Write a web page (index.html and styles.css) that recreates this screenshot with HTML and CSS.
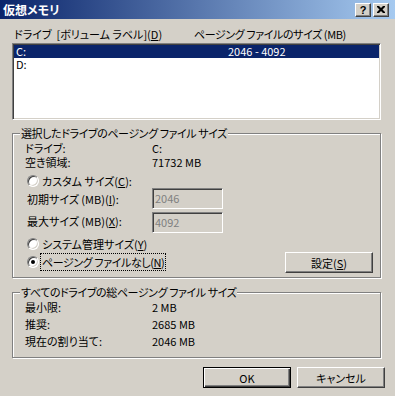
FILE: index.html
```html
<!DOCTYPE html>
<html lang="ja">
<head>
    <meta charset="UTF-8">
    <title>仮想メモリ</title>
    <link rel="stylesheet" href="styles.css">
</head>
<body>

<div class="window">
    <div class="titlebar">
        <span class="title">仮想メモリ</span>
        <div class="tb-buttons">
            <span class="tb-btn help">?</span>
            <span class="tb-btn">
                <svg width="8" height="7" viewBox="0 0 8 7">
                    <path d="M0 0h2l2 2 2-2h2v1l-2.5 2.5L8 6v1H6L4 5 2 7H0V6l2.5-2.5L0 1z" fill="#000"/>
                </svg>
            </span>
        </div>
    </div>

    <div class="client">
        <div class="col-head">
            <span class="col-drive">ドライブ&nbsp; [ボリューム ラベル](<u>D</u>)</span>
            <span class="narrow">ページング ファイルのサイズ (MB)</span>
        </div>

        <div class="listbox">
            <div class="row selected">
                <span class="c1">C:</span>
                <span>2046 - 4092</span>
            </div>
            <div class="row">
                <span class="c1">D:</span>
                <span></span>
            </div>
        </div>

        <fieldset class="group g1">
            <legend class="narrow">選択したドライブのページング ファイル サイズ</legend>
            <div class="info">
                <span class="k">ドライブ:</span>
                <span>C:</span>
            </div>
            <div class="info">
                <span class="k">空き領域:</span>
                <span>71732 MB</span>
            </div>
            <div class="option first">
                <span class="radio"></span>
                <span>カスタム サイズ(<u>C</u>):</span>
            </div>
            <div class="size-row">
                <span class="size-label">初期サイズ (MB)(<u>I</u>):</span>
                <span class="textbox">2046</span>
            </div>
            <div class="size-row second">
                <span class="size-label raised">最大サイズ (MB)(<u>X</u>):</span>
                <span class="textbox">4092</span>
            </div>
            <div class="bottom-block">
                <div class="options">
                    <div class="option">
                        <span class="radio"></span>
                        <span>システム管理サイズ(<u>Y</u>)</span>
                    </div>
                    <div class="option">
                        <span class="radio"><span class="dot"></span></span>
                        <span class="focused narrow">ページング ファイルなし(<u>N</u>)</span>
                    </div>
                </div>
                <span class="btn">設定(<u>S</u>)</span>
            </div>
        </fieldset>

        <fieldset class="group g2">
            <legend class="narrow">すべてのドライブの総ページング ファイル サイズ</legend>
            <div class="info tall">
                <span class="k">最小限:</span>
                <span>2 MB</span>
            </div>
            <div class="info tall">
                <span class="k">推奨:</span>
                <span>2685 MB</span>
            </div>
            <div class="info tall">
                <span class="k">現在の割り当て:</span>
                <span>2046 MB</span>
            </div>
        </fieldset>

        <div class="actions">
            <span class="btn default">OK</span>
            <span class="btn">キャンセル</span>
        </div>
    </div>
</div>

</body>
</html>
```

FILE: styles.css
```css
body {
    margin: 0;
    background: #d4d0c8;
    font-family: "Noto Sans CJK JP", sans-serif;
    font-size: 11px;
    font-feature-settings: "palt";
    color: #000;
}

.window {
    width: 395px;
    height: 396px;
    overflow: hidden;
}

/* タイトルバー */
.titlebar {
    height: 19px;
    background: linear-gradient(90deg, #0a246a, #a6caf0);
    display: flex;
    align-items: center;
    justify-content: space-between;
    padding: 0 6px 0 3px;
}

.title {
    color: #fff;
    font-weight: bold;
    font-size: 12px;
    line-height: 19px;
}

.tb-buttons {
    display: flex;
    gap: 2px;
}

.tb-btn {
    width: 16px;
    height: 14px;
    box-sizing: border-box;
    background: #d4d0c8;
    border: 1px solid;
    border-color: #fff #404040 #404040 #fff;
    box-shadow: inset -1px -1px #808080;
    display: flex;
    align-items: center;
    justify-content: center;
}

.tb-btn.help {
    font: bold 11px "Liberation Sans", sans-serif;
    line-height: 12px;
}

/* 本体 */
.client {
    padding: 9px 10px 0 12px;
}

.narrow {
    letter-spacing: -0.4px;
}

.col-head {
    display: flex;
    height: 13px;
    line-height: 13px;
}

.col-drive {
    width: 180px;
    padding-left: 2px;
}

.listbox {
    margin-top: 2px;
    width: 369px;
    height: 77px;
    box-sizing: border-box;
    background: #fff;
    border: 1px solid;
    border-color: #808080 #fff #fff #808080;
    box-shadow: inset 1px 1px #404040, inset -1px -1px #d4d0c8;
    padding: 1px;
}

.row {
    display: flex;
    height: 13px;
    line-height: 13px;
}

.row.selected {
    background: #0a246a;
    color: #fff;
}

.c1 {
    width: 212px;
    padding-left: 2px;
}

/* グループ枠 */
.group {
    margin: 7px 0 0;
    width: 369px;
    box-sizing: border-box;
    border: 1px solid #808080;
    box-shadow: inset 1px 1px #fff, 1px 1px #fff;
    padding: 0 7px 4px 12px;
}

.group legend {
    padding: 0 1px;
    margin-left: -5px;
    line-height: 13px;
    background: #d4d0c8;
}

.g2 {
    margin-top: 8px;
    padding-bottom: 7px;
}

.info {
    display: flex;
    height: 14px;
    line-height: 14px;
}

.info.tall {
    height: 17px;
    line-height: 17px;
}

.info .k {
    width: 127px;
    flex: none;
}

.g1 .info:first-of-type {
    margin-top: 1px;
}

.option {
    display: flex;
    align-items: center;
    height: 14px;
    padding-left: 2px;
}

.option.first {
    margin-top: 5px;
}

.radio {
    width: 12px;
    height: 12px;
    box-sizing: border-box;
    border-radius: 50%;
    background: #fff;
    border: 1px solid;
    border-color: #808080 #fff #fff #808080;
    box-shadow: inset 1px 1px #404040, inset -1px -1px #d4d0c8;
    margin-right: 3px;
    flex: none;
    display: flex;
    align-items: center;
    justify-content: center;
}

.dot {
    width: 4px;
    height: 4px;
    border-radius: 50%;
    background: #000;
}

.focused {
    outline: 1px dotted #000;
    padding: 0 1px;
    margin-left: -1px;
}

.size-row {
    display: flex;
    align-items: center;
    height: 21px;
    padding-left: 2px;
}

.size-row.second {
    margin-top: 3px;
}

.size-label {
    width: 125px;
    flex: none;
}

.size-label.raised {
    padding-bottom: 4px;
}

.textbox {
    width: 71px;
    height: 21px;
    box-sizing: border-box;
    border: 1px solid;
    border-color: #808080 #fff #fff #808080;
    box-shadow: inset 1px 1px #404040, inset -1px -1px #d4d0c8;
    color: #808080;
    padding: 0 2px;
    line-height: 19px;
}

.bottom-block {
    margin-top: 4px;
    display: flex;
    justify-content: space-between;
    align-items: flex-end;
}

.options {
    display: flex;
    flex-direction: column;
    gap: 4px;
    padding-bottom: 4px;
}

/* ボタン */
.btn {
    width: 88px;
    height: 21px;
    box-sizing: border-box;
    background: #d4d0c8;
    border: 1px solid;
    border-color: #fff #404040 #404040 #fff;
    box-shadow: inset -1px -1px #808080;
    display: flex;
    align-items: center;
    justify-content: center;
}

.btn.default {
    border: 1px solid #000;
    box-shadow: inset 1px 1px #fff, inset -1px -1px #404040, inset -2px -2px #808080;
}

.actions {
    margin-top: 9px;
    display: flex;
    justify-content: flex-end;
    gap: 6px;
}
```
